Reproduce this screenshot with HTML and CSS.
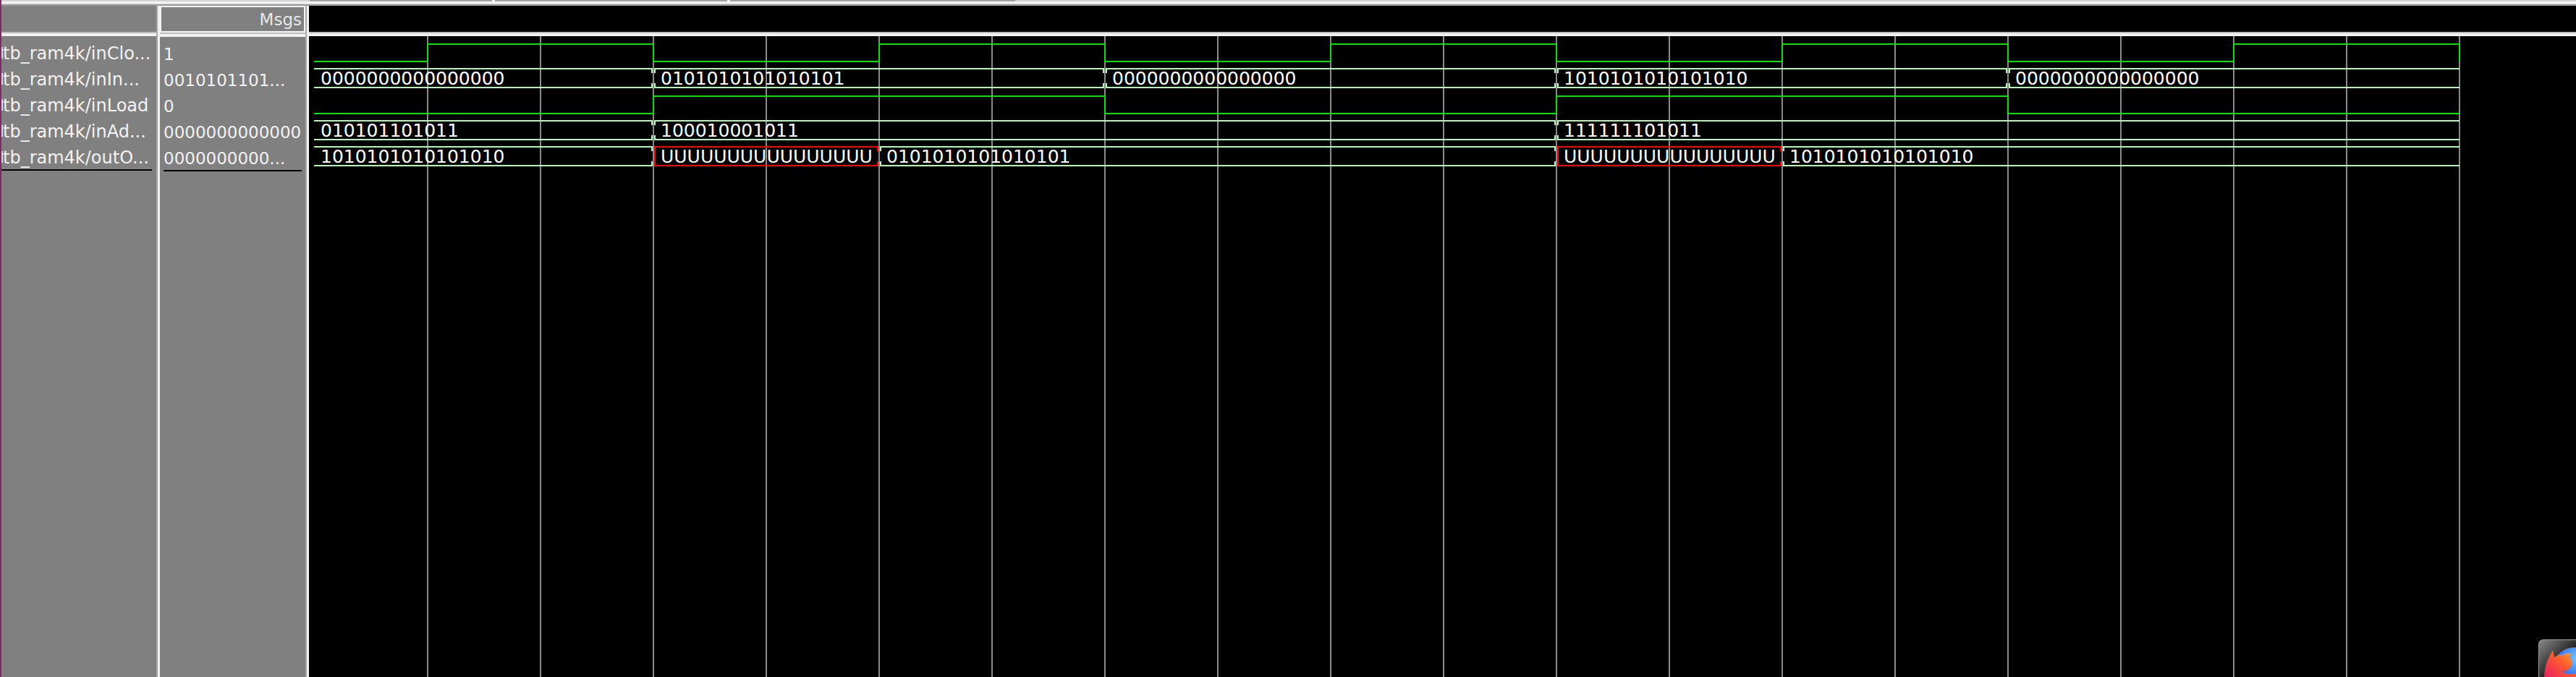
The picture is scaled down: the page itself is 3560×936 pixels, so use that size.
FILE: index.html
```html
<!DOCTYPE html>
<html>
<head>
<meta charset="utf-8">
<title>Wave - tb_ram4k</title>
<link rel="stylesheet" href="styles.css">
</head>
<body>
<div class="app">
  <div class="strip"></div>
  <div class="window">
    <div class="topbar">
      <div class="tabs"><span class="tab-gap"></span><span class="tab t1"></span><span class="notch"></span><span class="tab t2"></span><span class="notch"></span><span class="tab t3"></span></div>
      <div class="tb-hi"></div>
      <div class="tb-mid"></div>
      <div class="tb-lo"></div>
    </div>
    <div class="panes">
      <div class="pane names">
        <div class="head"></div>
        <div class="sep"></div>
        <div class="body">
          <div class="row">tb_ram4k/inClo...</div>
          <div class="row">tb_ram4k/inIn...</div>
          <div class="row">tb_ram4k/inLoad</div>
          <div class="row">tb_ram4k/inAd...</div>
          <div class="row last">tb_ram4k/outO...</div>
        </div>
      </div>
      <div class="divider"></div>
      <div class="pane values">
        <div class="head"><span class="msgs">Msgs</span></div>
        <div class="sep"></div>
        <div class="body">
          <div class="row">1</div>
          <div class="row">0010101101...</div>
          <div class="row">0</div>
          <div class="row">0000000000000</div>
          <div class="row last">0000000000...</div>
        </div>
      </div>
      <div class="divider"></div>
      <div class="pane waves">
        <div class="head"></div>
        <div class="sep"></div>
        <svg class="wave-svg" width="3133" height="886" viewBox="427 50 3133 886" xmlns="http://www.w3.org/2000/svg">
          <g class="grid">
            <line x1="591" y1="50" x2="591" y2="936"/>
            <line x1="747" y1="50" x2="747" y2="936"/>
            <line x1="903" y1="50" x2="903" y2="936"/>
            <line x1="1059" y1="50" x2="1059" y2="936"/>
            <line x1="1215" y1="50" x2="1215" y2="936"/>
            <line x1="1371" y1="50" x2="1371" y2="936"/>
            <line x1="1527" y1="50" x2="1527" y2="936"/>
            <line x1="1683" y1="50" x2="1683" y2="936"/>
            <line x1="1839" y1="50" x2="1839" y2="936"/>
            <line x1="1995" y1="50" x2="1995" y2="936"/>
            <line x1="2151" y1="50" x2="2151" y2="936"/>
            <line x1="2307" y1="50" x2="2307" y2="936"/>
            <line x1="2463" y1="50" x2="2463" y2="936"/>
            <line x1="2619" y1="50" x2="2619" y2="936"/>
            <line x1="2775" y1="50" x2="2775" y2="936"/>
            <line x1="2931" y1="50" x2="2931" y2="936"/>
            <line x1="3087" y1="50" x2="3087" y2="936"/>
            <line x1="3243" y1="50" x2="3243" y2="936"/>
            <line x1="3399" y1="50" x2="3399" y2="936"/>
          </g>
          <!-- inClock -->
          <path class="bit" d="M434 85 H591 V61 H903 V85 H1215 V61 H1527 V85 H1839 V61 H2151 V85 H2463 V61 H2775 V85 H3087 V61 H3399 V86"/>
          <!-- inInput -->
          <g class="bus">
            <path d="M434 95 H901 V101 M434 121 H901 V115"/>
            <path d="M905 101 V95 H1525 V101 M905 115 V121 H1525 V115"/>
            <path d="M1529 101 V95 H2149 V101 M1529 115 V121 H2149 V115"/>
            <path d="M2153 101 V95 H2773 V101 M2153 115 V121 H2773 V115"/>
            <path d="M2777 101 V95 H3399 M2777 115 V121 H3399"/>
          </g>
          <g class="val">
            <text x="443" y="117">0000000000000000</text>
            <text x="913" y="117">0101010101010101</text>
            <text x="1537" y="117">0000000000000000</text>
            <text x="2161" y="117">1010101010101010</text>
            <text x="2785" y="117">0000000000000000</text>
          </g>
          <!-- inLoad -->
          <path class="bit" d="M434 157 H903 V133 H1527 V157 H2151 V133 H2775 V157 H3399"/>
          <!-- inAddress -->
          <g class="bus">
            <path d="M434 167 H901 V173 M434 193 H901 V187"/>
            <path d="M905 173 V167 H2149 V173 M905 187 V193 H2149 V187"/>
            <path d="M2153 173 V167 H3399 M2153 187 V193 H3399"/>
          </g>
          <g class="val">
            <text x="443" y="189">010101101011</text>
            <text x="913" y="189">100010001011</text>
            <text x="2161" y="189">111111101011</text>
          </g>
          <!-- outOutput -->
          <g class="bus">
            <path d="M434 203 H901 V209 M434 229 H901 V223"/>
            <path d="M1217 209 V203 H2149 V209 M1217 223 V229 H2149 V223"/>
            <path d="M2465 209 V203 H3399 M2465 223 V229 H3399"/>
          </g>
          <g class="bus-x">
            <path d="M1213 209 V203 H905 V229 H1213 V223"/>
            <path d="M2461 209 V203 H2153 V229 H2461 V223"/>
          </g>
          <g class="val">
            <text x="443" y="225">1010101010101010</text>
            <text x="913" y="225">UUUUUUUUUUUUUUUU</text>
            <text x="1225" y="225">0101010101010101</text>
            <text x="2161" y="225">UUUUUUUUUUUUUUUU</text>
            <text x="2473" y="225">1010101010101010</text>
          </g>
        </svg>
      </div>
    </div>
  </div>
</div>
<div class="ffx">
  <svg width="60" height="60" viewBox="0 0 60 60" xmlns="http://www.w3.org/2000/svg">
    <defs>
      <linearGradient id="ffxbg" x1="0" y1="0" x2="1" y2="1">
        <stop offset="0" stop-color="#8a8a8a"/>
        <stop offset="0.45" stop-color="#222"/>
        <stop offset="1" stop-color="#000"/>
      </linearGradient>
      <radialGradient id="ffxglobe" cx="0.55" cy="0.25" r="0.85">
        <stop offset="0" stop-color="#74c8ff"/>
        <stop offset="0.5" stop-color="#2e6ff2"/>
        <stop offset="1" stop-color="#5a2cc8"/>
      </radialGradient>
      <linearGradient id="ffxfox" x1="1" y1="0" x2="0" y2="1">
        <stop offset="0" stop-color="#ffc230"/>
        <stop offset="0.45" stop-color="#ff5b2c"/>
        <stop offset="1" stop-color="#e3136f"/>
      </linearGradient>
    </defs>
    <rect x="0.5" y="0.5" width="68" height="68" rx="6" fill="url(#ffxbg)" stroke="#9c9c9c"/>
    <circle cx="50" cy="42" r="31" fill="url(#ffxglobe)"/>
    <path d="M8 60 C7 44 11 28 20 15 L22 25 C26 21 31 20 35 21 C39 18 43 19 46 21 L42 24 C46 27 47 31 46 35 C44 41 38 44 32 44 C40 49 50 49 58 44 L60 60 Z" fill="url(#ffxfox)"/>
  </svg>
</div>
</body>
</html>
```

FILE: styles.css
```css
html, body {
  margin: 0;
  padding: 0;
  background: #000;
}

body {
  width: 3560px;
  height: 936px;
  overflow: hidden;
  position: relative;
  font-family: "DejaVu Sans", "Liberation Sans", sans-serif;
}

.app {
  display: flex;
  height: 936px;
}

.strip {
  width: 2px;
  flex: 0 0 2px;
  background: #7b2e62;
}

.window {
  flex: 1;
  display: flex;
  flex-direction: column;
  min-width: 0;
}

/* top frame */
.topbar {
  flex: 0 0 8px;
  display: flex;
  flex-direction: column;
}

.tabs {
  height: 2px;
  display: flex;
  background: #d4d4d4;
}

.tab-gap { width: 426px; }
.tab { background: #a2a2a2; }
.t1 { width: 252px; }
.t2 { width: 321px; }
.t3 { width: 394px; }
.notch { width: 4px; background: #f4f4f4; }

.tb-hi { height: 3px; background: #f4f4f4; }
.tb-mid { height: 1px; background: #cfcfcf; }
.tb-lo { height: 2px; background: #9c9c9c; }

/* panes */
.panes {
  flex: 1;
  display: flex;
  min-height: 0;
}

.pane {
  display: flex;
  flex-direction: column;
  overflow: hidden;
}

.names { width: 214px; flex: 0 0 214px; background: #808080; }
.values { width: 201px; flex: 0 0 201px; background: #808080; }
.waves { flex: 1; background: #000; }

.divider {
  flex: 0 0 3px;
  border-left: 2px solid #a8a8a8;
  background: #f0f0f0;
}

.head {
  flex: 0 0 36px;
  box-sizing: border-box;
}

.values .head {
  border: 2px solid #f2f2f2;
  text-align: right;
  padding: 1px 3px 0 0;
}

.msgs {
  font-size: 23px;
  line-height: 32px;
  color: #e6e6e6;
}

.sep {
  flex: 0 0 4px;
  border-top: 2px solid #bdbdbd;
  background: #f2f2f2;
}

.body {
  flex: 1;
  padding-top: 6px;
  overflow: hidden;
}

.row {
  height: 36px;
  line-height: 36px;
  white-space: nowrap;
  color: #f2f2f2;
}

.names .row {
  position: relative;
  font-size: 24px;
  padding-left: 2px;
  margin-right: 6px;
}

/* right-hand sliver of the leading "/" of the scrolled path */
.names .row::before {
  content: "";
  position: absolute;
  left: 0;
  top: 9px;
  width: 2px;
  height: 16px;
  background: #d9d6e6;
}

.values .row {
  font-size: 23px;
  margin: 0 5px;
}

.row.last {
  background: linear-gradient(#000, #000) no-repeat 0 34px / 100% 2px;
}

/* waveform canvas */
.wave-svg {
  display: block;
  flex: 0 0 auto;
}

.grid line {
  stroke: #8a8a8a;
  stroke-width: 2;
}

.bit {
  fill: none;
  stroke: #00e600;
  stroke-width: 2;
}

.bus path {
  fill: none;
  stroke: #b6f3b6;
  stroke-width: 2;
}

.bus-x path {
  fill: none;
  stroke: #ff0000;
  stroke-width: 2;
}

.val text {
  font-family: "DejaVu Sans", sans-serif;
  font-size: 25px;
  fill: #ffffff;
}

/* dock icon peeking in the corner */
.ffx {
  position: absolute;
  left: 3508px;
  top: 884px;
  width: 60px;
  height: 60px;
}

.ffx svg {
  display: block;
}
```
